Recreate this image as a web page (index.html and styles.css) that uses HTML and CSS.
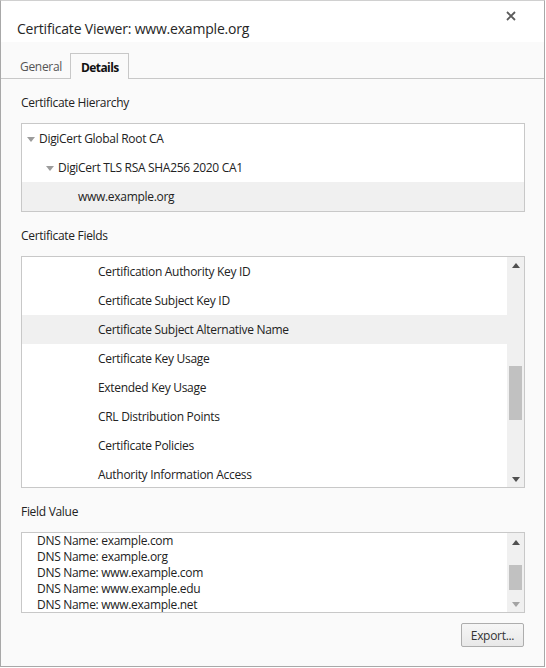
FILE: index.html
```html
<!DOCTYPE html>
<html>
<head>
<meta charset="utf-8">
<link rel="stylesheet" href="styles.css">
</head>
<body>
<div class="dialog">
  <div class="header">
    <div class="title">Certificate Viewer: www.example.org</div>
    <svg class="close" width="10" height="10" viewBox="0 0 10 10"><path d="M1 1L9 9M9 1L1 9" stroke="#5b5b5b" stroke-width="1.8" fill="none"/></svg>
  </div>
  <div class="tabs">
    <div class="tab">General</div>
    <div class="tab active">Details</div>
  </div>
  <div class="content">
    <div class="label">Certificate Hierarchy</div>
    <div class="box hier">
      <div class="row lvl0"><span class="tri"></span>DigiCert Global Root CA</div>
      <div class="row lvl1"><span class="tri"></span>DigiCert TLS RSA SHA256 2020 CA1</div>
      <div class="row lvl2 sel">www.example.org</div>
    </div>
    <div class="label">Certificate Fields</div>
    <div class="box fields">
      <div class="list">
        <div class="row field">Certification Authority Key ID</div>
        <div class="row field">Certificate Subject Key ID</div>
        <div class="row field sel">Certificate Subject Alternative Name</div>
        <div class="row field">Certificate Key Usage</div>
        <div class="row field">Extended Key Usage</div>
        <div class="row field">CRL Distribution Points</div>
        <div class="row field">Certificate Policies</div>
        <div class="row field">Authority Information Access</div>
      </div>
      <div class="scrollbar">
        <span class="arr up"></span>
        <div class="track"><div class="thumb thumb1"></div></div>
        <span class="arr down"></span>
      </div>
    </div>
    <div class="label">Field Value</div>
    <div class="box value">
      <div class="lines">
        <div class="line">DNS Name: example.com</div>
        <div class="line">DNS Name: example.org</div>
        <div class="line">DNS Name: www.example.com</div>
        <div class="line">DNS Name: www.example.edu</div>
        <div class="line">DNS Name: www.example.net</div>
      </div>
      <div class="scrollbar small">
        <span class="arr up"></span>
        <div class="track"><div class="thumb thumb2"></div></div>
        <span class="arr down dim"></span>
      </div>
    </div>
    <div class="actions">
      <button class="btn">Export...</button>
    </div>
  </div>
</div>
</body>
</html>
```

FILE: styles.css
```css
* { box-sizing: border-box; }
html, body { margin: 0; padding: 0; background: #ffffff; }
body {
  font-family: "Open Sans", "Noto Sans", "Liberation Sans", sans-serif;
  color: #222222;
}
.dialog {
  width: 545px;
  height: 667px;
  border: 1px solid #a8a8a8;
  border-top-color: #d0d0d0;
  background: #fafafa;
  overflow: hidden;
}
.header {
  height: 41px;
  background: #ffffff;
  display: flex;
  justify-content: space-between;
  align-items: flex-start;
  padding: 0 0 0 16px;
}
.title {
  font-size: 14px;
  letter-spacing: -0.2px;
  line-height: 20px;
  margin-top: 18px;
  color: #262626;
}
.close {
  margin-top: 10px;
  margin-right: 28px;
}
.tabs {
  height: 37px;
  display: flex;
  align-items: flex-end;
  padding-left: 10px;
  border-bottom: 1px solid #c8c8c8;
  background: #fafafa;
}
.tab {
  height: 25px;
  font-size: 12px;
  letter-spacing: -0.3px;
  line-height: 27px;
  padding: 0 8px 0 9px;
  color: #555555;
}
.tab.active {
  border: 1px solid #c8c8c8;
  border-bottom: none;
  background: #fafafa;
  color: #111111;
  font-weight: 700;
  letter-spacing: -0.6px;
  height: 26px;
  margin-bottom: -1px;
  padding: 0 9px 0 10px;
}
.content {
  padding: 0 19px 0 20px;
}
.label {
  font-size: 12px;
  letter-spacing: -0.3px;
  line-height: 16px;
  margin-top: 16px;
  margin-bottom: 12px;
  color: #222222;
}
.box {
  border: 1px solid #c8c8c8;
  background: #ffffff;
  overflow: hidden;
}
.row {
  height: 29px;
  font-size: 12px;
  letter-spacing: -0.3px;
  line-height: 29px;
  white-space: nowrap;
  display: flex;
  align-items: center;
}
.row.sel { background: #f0f0f0; }
.hier { height: 89px; }
.lvl0 { padding-left: 5px; }
.lvl1 { padding-left: 24px; }
.lvl2 { padding-left: 56px; }
.tri {
  width: 0;
  height: 0;
  border-left: 4px solid transparent;
  border-right: 4px solid transparent;
  border-top: 5px solid #9c9c9c;
  margin-right: 4px;
  margin-top: 1px;
}
.fields {
  height: 232px;
  display: flex;
}
.list { flex: 1; overflow: hidden; }
.field { padding-left: 76px; }
.scrollbar {
  width: 17px;
  background: #f0f0f0;
  display: flex;
  flex-direction: column;
  align-items: center;
  padding: 6px 0 5px;
}
.track {
  flex: 1;
  width: 100%;
  padding: 0 2px;
}
.thumb { background: #c1c1c1; }
.thumb1 { margin-top: 98px; height: 54px; }
.arr {
  width: 0;
  height: 0;
  border-left: 4px solid transparent;
  border-right: 4px solid transparent;
}
.arr.up { border-bottom: 5px solid #505050; }
.arr.down { border-top: 5px solid #505050; }
.arr.dim { border-top-color: #a3a3a3; }
.value {
  height: 81px;
  display: flex;
}
.lines { flex: 1; padding-left: 15px; overflow: hidden; }
.line {
  font-size: 12px;
  letter-spacing: -0.3px;
  line-height: 16px;
  height: 16px;
  white-space: nowrap;
}
.scrollbar.small { padding: 7px 0 5px; }
.thumb2 { margin-top: 20px; height: 25px; }
.actions {
  display: flex;
  justify-content: flex-end;
  margin-top: 10px;
  padding-right: 1px;
}
.btn {
  width: 63px;
  height: 24px;
  font-family: "Open Sans", "Noto Sans", sans-serif;
  font-size: 12px;
  letter-spacing: -0.3px;
  color: #333333;
  border: 1px solid #adadad;
  border-radius: 2px;
  background: linear-gradient(#f6f6f6, #e8e8e8);
  padding: 0;
}
```
